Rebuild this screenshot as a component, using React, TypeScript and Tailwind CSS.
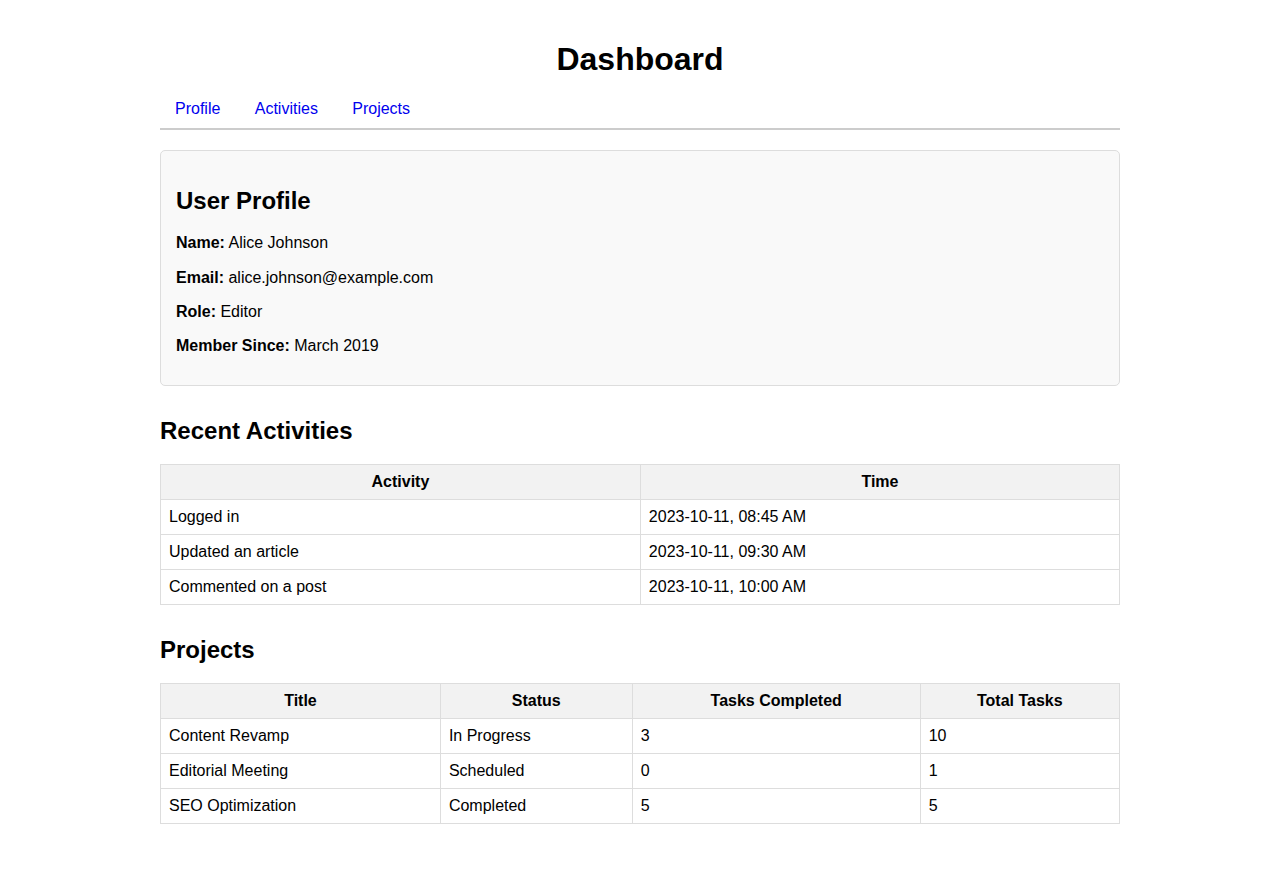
const activities = [
  { activity: "Logged in", time: "2023-10-11, 08:45 AM" },
  { activity: "Updated an article", time: "2023-10-11, 09:30 AM" },
  { activity: "Commented on a post", time: "2023-10-11, 10:00 AM" },
];

const projects = [
  { title: "Content Revamp", status: "In Progress", done: 3, total: 10 },
  { title: "Editorial Meeting", status: "Scheduled", done: 0, total: 1 },
  { title: "SEO Optimization", status: "Completed", done: 5, total: 5 },
];

const th = "border border-[#ddd] bg-[#f2f2f2] p-[8px] font-bold text-center leading-[18px]";
const td = "border border-[#ddd] p-[8px] text-left leading-[18px]";

function App() {
  return (
    <div className="min-h-screen bg-white text-black font-['Liberation_Sans',Arial,sans-serif] text-[16px]">
      <div className="w-[960px] mx-auto pt-[20px] pb-[40px]">
        {/* Header */}
        <h1 className="text-[32px] font-bold text-center leading-[37px] mt-[21.44px] mb-[22px]">
          Dashboard
        </h1>

        {/* Nav */}
        <nav className="flex gap-[4.4px] border-b-2 border-[#ccc] pb-[9px] leading-[18.4px]">
          <a href="#profile" className="px-[15px] text-[#0000ee]">Profile</a>
          <a href="#activities" className="px-[15px] text-[#0000ee]">Activities</a>
          <a href="#projects" className="px-[15px] text-[#0000ee]">Projects</a>
        </nav>

        {/* Profile card */}
        <div className="mt-[20px] bg-[#f9f9f9] border border-[#ddd] rounded-[5px] px-[15px] pt-[16px] pb-[29px]">
          <h2 className="text-[24px] font-bold leading-[27.6px] my-[19.92px]">User Profile</h2>
          <p className="leading-[18.4px] mb-[16px]"><strong>Name:</strong> Alice Johnson</p>
          <p className="leading-[18.4px] mb-[16px]"><strong>Email:</strong> alice.johnson@example.com</p>
          <p className="leading-[18.4px] mb-[16px]"><strong>Role:</strong> Editor</p>
          <p className="leading-[18.4px]"><strong>Member Since:</strong> March 2019</p>
        </div>

        {/* Activities */}
        <h2 className="text-[24px] font-bold leading-[27.6px] mt-[31px] mb-[19.92px]">Recent Activities</h2>
        <table className="w-full border-collapse">
          <thead>
            <tr>
              <th className={th}>Activity</th>
              <th className={th}>Time</th>
            </tr>
          </thead>
          <tbody>
            {activities.map((a) => (
              <tr key={a.activity}>
                <td className={td}>{a.activity}</td>
                <td className={td}>{a.time}</td>
              </tr>
            ))}
          </tbody>
        </table>

        {/* Projects */}
        <h2 className="text-[24px] font-bold leading-[27.6px] mt-[31px] mb-[19px]">Projects</h2>
        <table className="w-full border-collapse">
          <thead>
            <tr>
              <th className={th}>Title</th>
              <th className={th}>Status</th>
              <th className={th}>Tasks Completed</th>
              <th className={th}>Total Tasks</th>
            </tr>
          </thead>
          <tbody>
            {projects.map((p) => (
              <tr key={p.title}>
                <td className={td}>{p.title}</td>
                <td className={td}>{p.status}</td>
                <td className={td}>{p.done}</td>
                <td className={td}>{p.total}</td>
              </tr>
            ))}
          </tbody>
        </table>
      </div>
    </div>
  );
}

export default App;
